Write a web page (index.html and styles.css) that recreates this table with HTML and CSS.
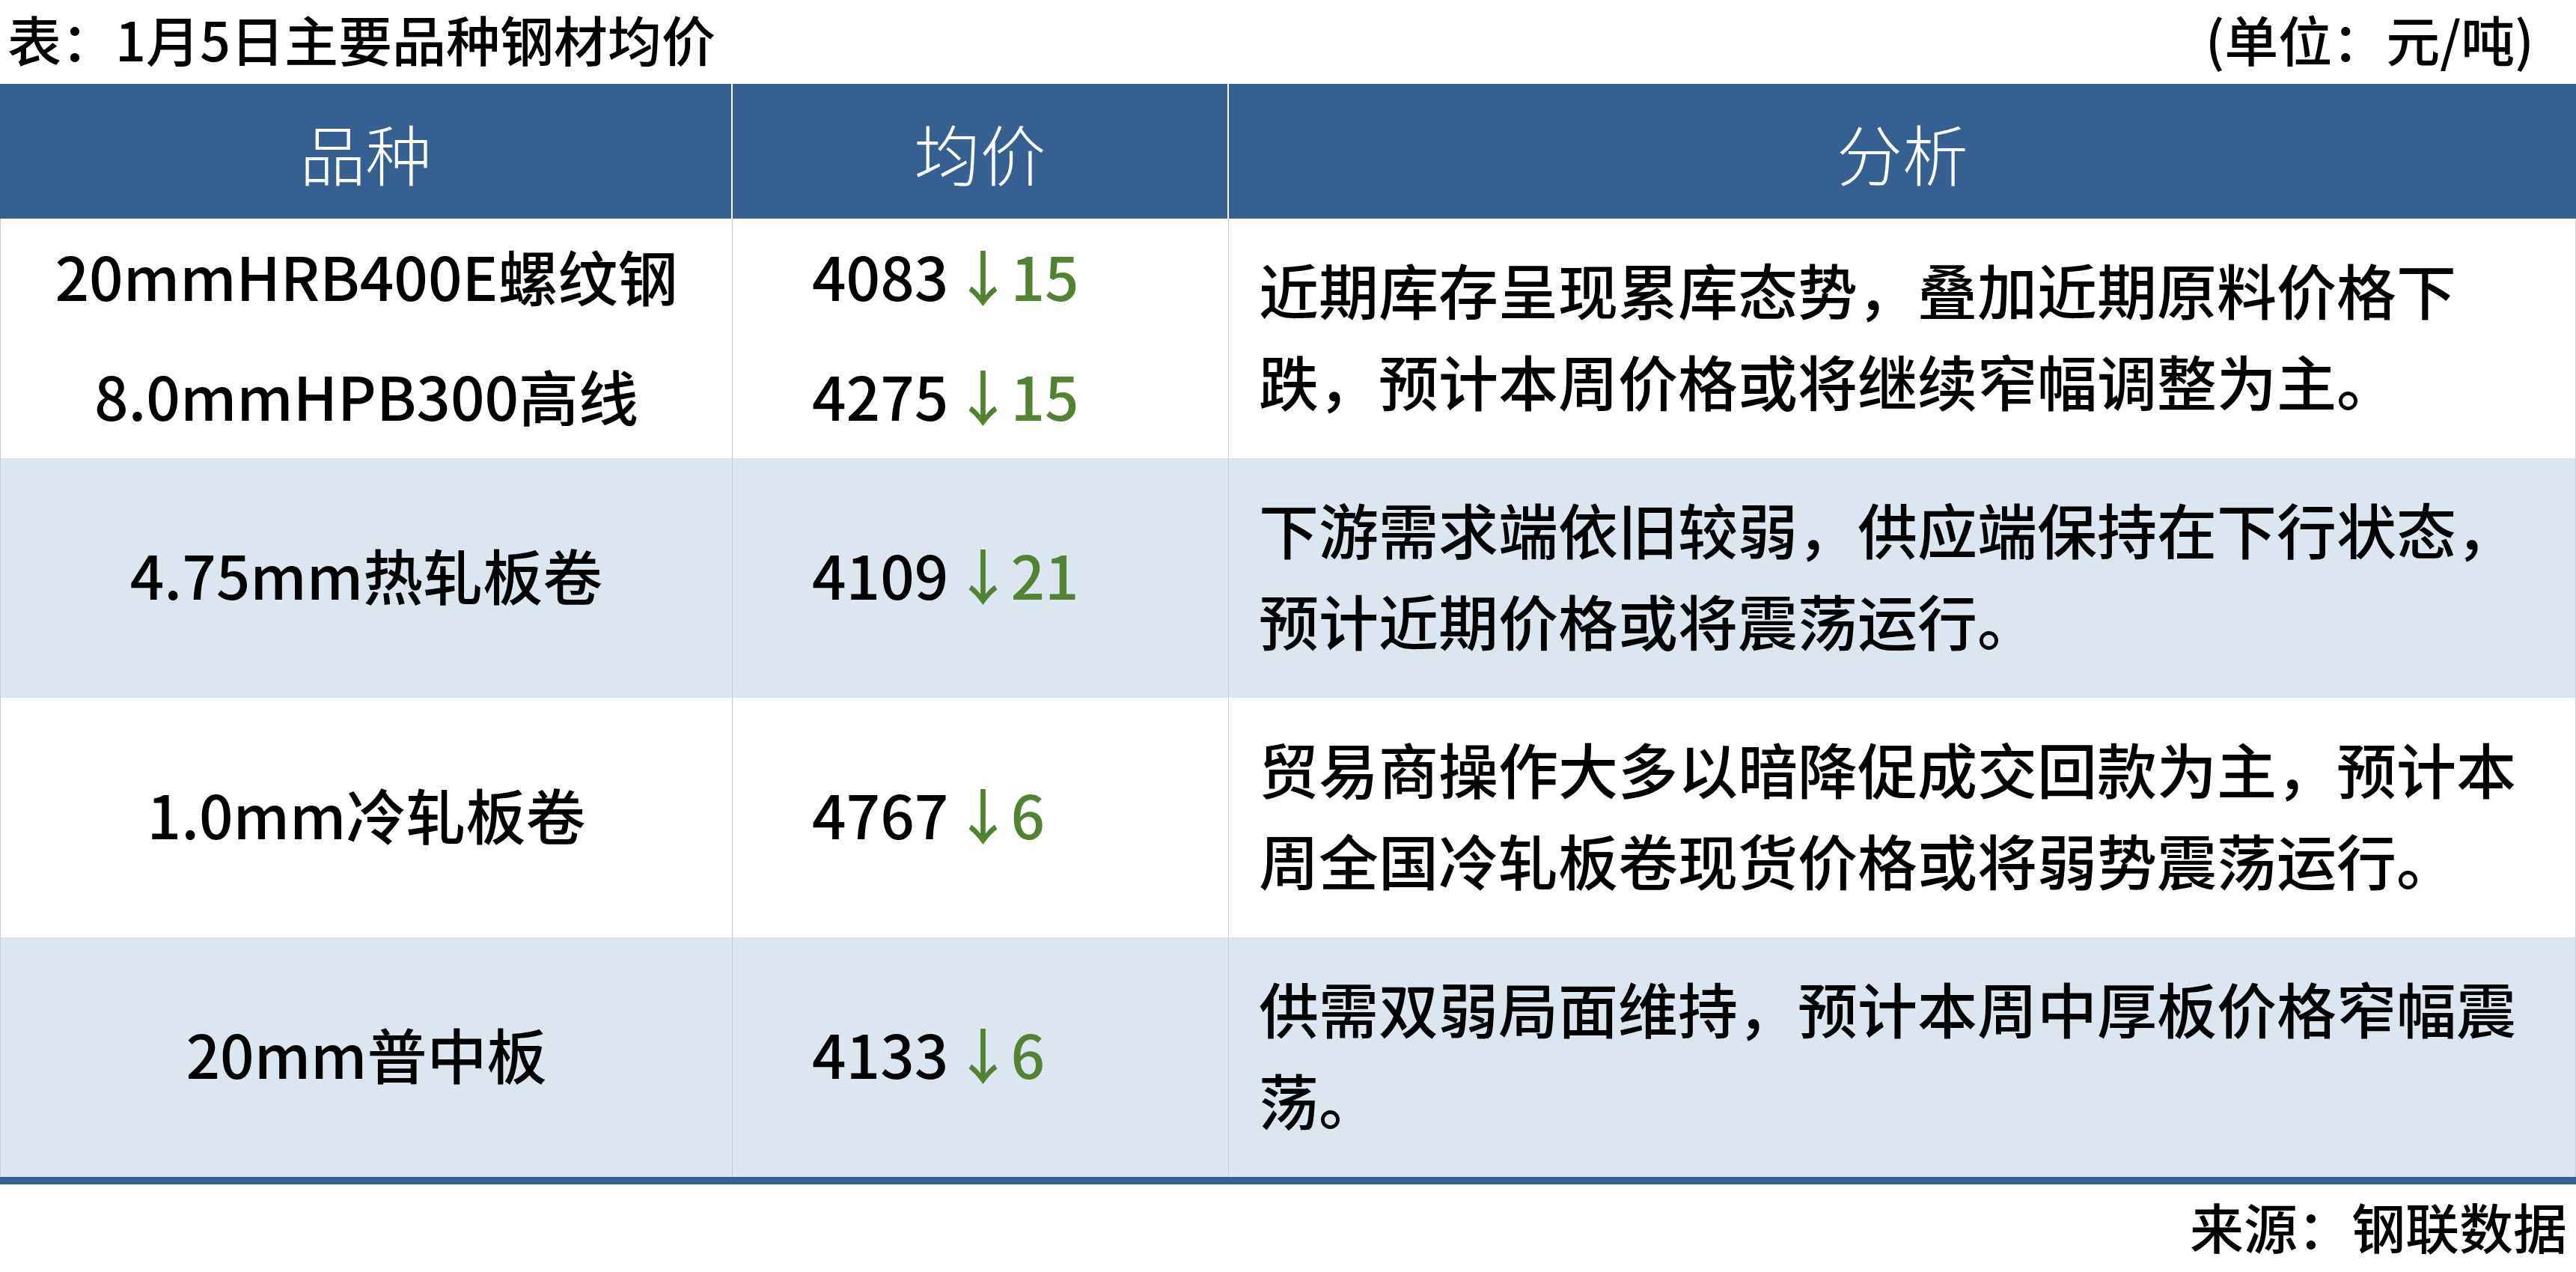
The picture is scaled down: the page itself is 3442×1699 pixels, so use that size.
FILE: index.html
```html
<!DOCTYPE html>
<html lang="zh-CN">
<head>
<meta charset="utf-8">
<title>1月5日主要品种钢材均价</title>
<link rel="stylesheet" href="styles.css">
</head>
<body>
<div class="page">
  <div class="caption">
    <span class="caption-title">表：1月5日主要品种钢材均价</span>
    <span class="caption-unit">(单位：元/吨)</span>
  </div>

  <div class="table">
    <div class="thead">
      <div class="th">品种</div>
      <div class="th">均价</div>
      <div class="th">分析</div>
    </div>

    <div class="row">
      <div class="cell name split">
        <div class="line">20mmHRB400E螺纹钢</div>
        <div class="line">8.0mmHPB300高线</div>
      </div>
      <div class="cell price split">
        <div class="line">4083<span class="chg"><span class="arr">↓</span>15</span></div>
        <div class="line">4275<span class="chg"><span class="arr">↓</span>15</span></div>
      </div>
      <div class="cell note">近期库存呈现累库态势，叠加近期原料价格下<br>跌，预计本周价格或将继续窄幅调整为主。</div>
    </div>

    <div class="row alt">
      <div class="cell name">4.75mm热轧板卷</div>
      <div class="cell price"><div class="line">4109<span class="chg"><span class="arr">↓</span>21</span></div></div>
      <div class="cell note">下游需求端依旧较弱，供应端保持在下行状态，<br>预计近期价格或将震荡运行。</div>
    </div>

    <div class="row">
      <div class="cell name">1.0mm冷轧板卷</div>
      <div class="cell price"><div class="line">4767<span class="chg"><span class="arr">↓</span>6</span></div></div>
      <div class="cell note">贸易商操作大多以暗降促成交回款为主，预计本<br>周全国冷轧板卷现货价格或将弱势震荡运行。</div>
    </div>

    <div class="row alt">
      <div class="cell name">20mm普中板</div>
      <div class="cell price"><div class="line">4133<span class="chg"><span class="arr">↓</span>6</span></div></div>
      <div class="cell note">供需双弱局面维持，预计本周中厚板价格窄幅震<br>荡。</div>
    </div>
  </div>

  <div class="source">来源：钢联数据</div>
</div>
</body>
</html>
```

FILE: styles.css
```css
html, body {
  margin: 0;
  padding: 0;
  background: #ffffff;
}

body {
  font-family: "Noto Sans CJK SC", "Noto Sans", sans-serif;
  color: #000000;
}

.page {
  width: 3442px;
}

.caption {
  display: flex;
  justify-content: space-between;
  align-items: center;
  height: 101px;
  margin-bottom: 11px;
  padding: 0 56px 0 10px;
  font-size: 72px;
  font-weight: 500;
  line-height: 101px;
  white-space: nowrap;
}

.table {
  border-bottom: 10px solid #366092;
}

.thead,
.row {
  display: grid;
  grid-template-columns: 977px 663px 1fr;
}

.thead {
  height: 180px;
  background: #366092;
}

.th {
  display: flex;
  align-items: center;
  justify-content: center;
  color: #ffffff;
  font-size: 88px;
  font-weight: 300;
  white-space: nowrap;
}

.th + .th {
  border-left: 2px solid #ffffff;
}

.row {
  height: 320px;
  background: #ffffff;
  border-left: 1px solid #c3ccd8;
  border-right: 1px solid #c3ccd8;
}

.row.alt {
  background: #dce6f1;
}

.cell {
  display: flex;
  flex-direction: column;
  justify-content: center;
  padding-bottom: 12px;
  font-size: 80px;
  font-weight: 500;
  white-space: nowrap;
}

.cell + .cell {
  border-left: 1px solid #c3ccd8;
}

.cell.split {
  justify-content: flex-start;
  padding-bottom: 0;
}

.split .line {
  height: 160px;
  line-height: 150px;
}

.name {
  align-items: center;
  text-align: center;
}

.price {
  padding-left: 106px;
}

.chg {
  color: #548235;
}

.arr {
  font-family: "Noto Sans CJK SC", sans-serif;
  margin-left: 6px;
  margin-right: -3px;
}

.note {
  padding-left: 40px;
  line-height: 122px;
}

.source {
  text-align: right;
  font-size: 72px;
  font-weight: 500;
  line-height: 100px;
  padding: 5px 12px 0 0;
  white-space: nowrap;
}
```
